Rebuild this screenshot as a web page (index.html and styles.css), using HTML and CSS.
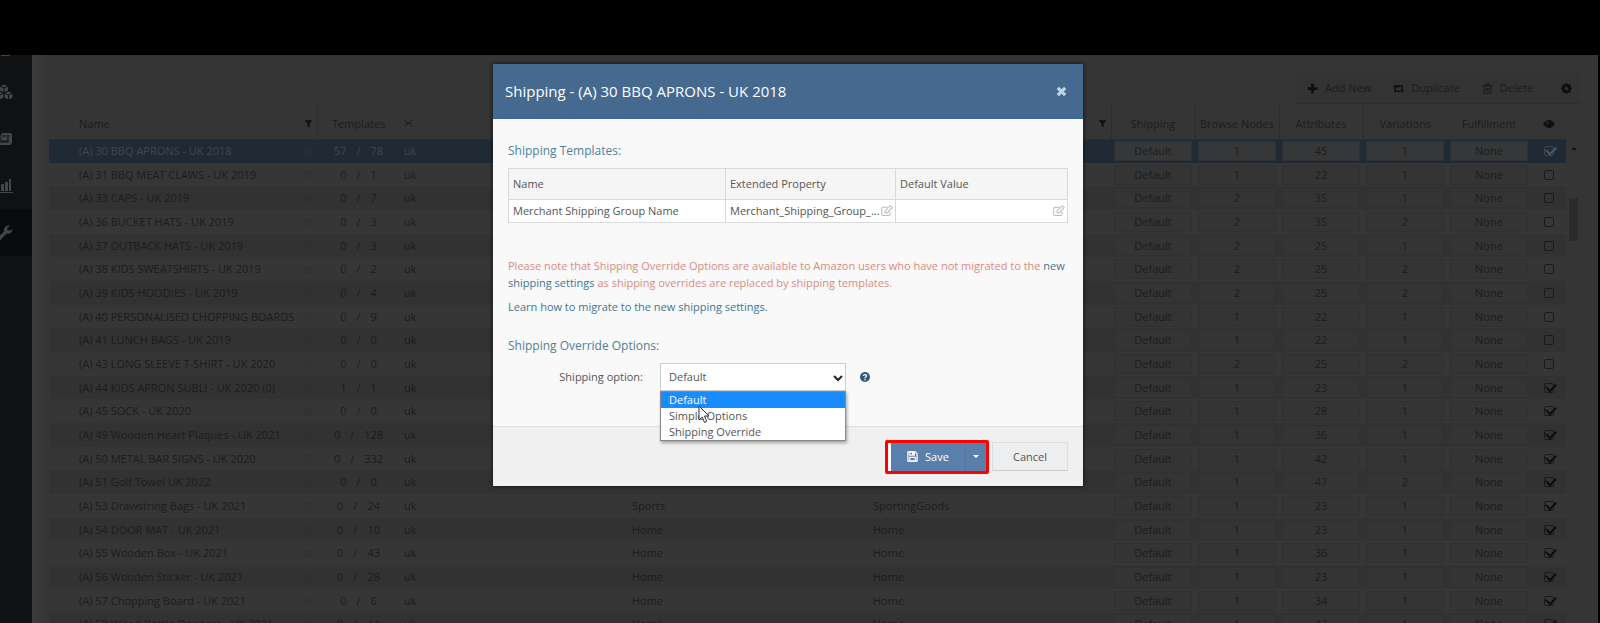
FILE: index.html
```html
<!DOCTYPE html>
<html lang="en">
<head>
<meta charset="utf-8">
<title>Shipping Templates</title>
<link rel="stylesheet" href="styles.css">
</head>
<body>
<svg class="sprite" aria-hidden="true">
  <symbol id="i-edit" viewBox="0 0 16 16"><path d="M12 9v3.500a1.500 1.500 0 0 1-1.500 1.500h-8A1.500 1.500 0 0 1 1 12.500v-8A1.500 1.500 0 0 1 2.500 3H9" fill="none" stroke="currentColor" stroke-width="1.400"/><path d="M5.500 10.500V8L12.500 1l2.500 2.500-7 7z" fill="none" stroke="currentColor" stroke-width="1.400"/></symbol>
  <symbol id="i-filter" viewBox="0 0 16 16"><path d="M1 2h14L10 8v7L6 12V8z" fill="currentColor"/></symbol>
</svg>
<div class="letterbox"></div>
<div class="app">
  <nav class="sidebar" aria-label="Main">
    <a class="nav-item nav-first" href="#" aria-label="Home"><svg viewBox="0 0 16 16"><path d="M4 13h9v2H4z" fill="currentColor"/></svg></a>
    <a class="nav-item" href="#" aria-label="Products"><svg viewBox="0 0 16 16"><g fill="currentColor" stroke="#0f1112"><path d="M7 0l4.500 2v5L7 9 2.500 7V2z"/><path d="M2.500 7L7 9v5l-4.500 2L-2 14V9z"/><path d="M11.500 7L16 9v5l-4.500 2L7 14V9z"/><path d="M2.500 2L7 4l4.500-2M7 4v5M7 9l4.500 2L16 9M11.500 11v5M-2 9l4.500 2L7 9M2.500 11v5" fill="none"/></g></svg></a>
    <a class="nav-item" href="#" aria-label="Orders"><svg viewBox="0 0 16 16"><path d="M5 2h8q2 0 2 2v8l-2 2H0V6h3z" fill="currentColor"/><path d="M5 5h8M4 6v4h7V6M3 11h9" fill="none" stroke="#0f1112"/></svg></a>
    <a class="nav-item" href="#" aria-label="Reports"><svg viewBox="0 0 16 16"><path d="M0 9h2v4H0zM4 6h3v7H4zM8 4h3v9H8zM12 1h2v12h-2zM0 14h16v1H0z" fill="currentColor"/></svg></a>
    <a class="nav-item active" href="#" aria-label="Settings"><svg viewBox="0 0 16 16"><path d="M15.500 4.500a4.500 4.500 0 0 1-6 4L3.500 15A1.800 1.800 0 0 1 1 12.500l6.200-6A4.500 4.500 0 0 1 13 .8L10.300 3l.2 2.200 2.300.3z" fill="currentColor"/></svg></a>
  </nav>
  <main class="content">
    <div class="toolbar">
      <button type="button"><svg viewBox="0 0 16 16"><path d="M8 1v14M1 8h14" stroke="currentColor" stroke-width="4"/></svg>Add New</button>
      <button type="button"><svg viewBox="0 0 16 16"><path d="M3 13V5h7M3 12h7M13 3v8M6 4h7" stroke="currentColor" stroke-width="2" fill="none"/><path d="M0 6l3-4 3 4zM10 10l3 4 3-4z" fill="currentColor"/></svg>Duplicate</button>
      <button type="button"><svg viewBox="0 0 16 16"><path d="M1 4h14M5 4l1-3h4l1 3M3 4v11h10V4M6 7v5M8 7v5M10 7v5" stroke="currentColor" fill="none"/></svg>Delete</button>
      <button type="button" aria-label="Settings"><svg viewBox="0 0 16 16"><circle cx="8" cy="8" r="4.500" fill="none" stroke="currentColor" stroke-width="4"/><path d="M8 0v3M8 13v3M0 8h3M13 8h3M2.500 2.500l2 2M11.500 11.500l2 2M13.500 2.500l-2 2M4.500 11.500l-2 2" stroke="currentColor" stroke-width="2.500"/></svg></button>
    </div>
    <div class="grid-wrap">
      <div class="grid-main">
      <table class="grid">
        <colgroup><col class="c-name"><col class="c-tpl"><col class="c-site"><col class="c-cat"><col><col class="c-act"><col class="c-act"><col class="c-act"><col class="c-act"><col class="c-act"><col class="c-eye"></colgroup>
        <thead>
          <tr>
            <th class="name sep"><div class="split"><span>Name</span><svg><use href="#i-filter"/></svg></div></th>
            <th class="tpl">Templates</th>
            <th class="site" aria-label="Site"><svg viewBox="0 0 16 16"><path d="M1 2l6 6-6 6M15 2L9 8l6 6M3 8h10" stroke="currentColor" stroke-width="1.500" fill="none"/></svg></th>
            <th></th>
            <th class="sep last-cat"><svg><use href="#i-filter"/></svg></th>
            <th class="sep">Shipping</th>
            <th class="sep">Browse Nodes</th>
            <th class="sep">Attributes</th>
            <th>Variations</th>
            <th>Fulfillment</th>
            <th class="visible" aria-label="Visible"><svg viewBox="0 0 16 16"><path d="M0 8q8-11 16 0-8 11-16 0z" fill="currentColor"/><circle cx="6" cy="6" r="1.500" fill="#353535"/></svg></th>
          </tr>
        </thead>
        <tbody id="rows"></tbody>
      </table>
      </div>
      <div class="scroll"><span class="arrow"></span><span class="thumb"></span></div>
    </div>
  </main>
</div>

<section class="modal" role="dialog" aria-labelledby="title">
  <header class="modal-head">
    <h1 id="title">Shipping - (A) 30 BBQ APRONS - UK 2018</h1>
    <button type="button" class="close" aria-label="Close"><svg viewBox="0 0 12 12"><path d="M2 2l8 8M10 2l-8 8" stroke="currentColor" stroke-width="3.500"/></svg></button>
  </header>
  <div class="modal-body">
    <h2>Shipping Templates:</h2>
    <table class="props">
      <thead><tr><th class="p-name">Name</th><th class="p-ext">Extended Property</th><th>Default Value</th></tr></thead>
      <tbody><tr>
        <td>Merchant Shipping Group Name</td>
        <td><div class="split"><span>Merchant_Shipping_Group_...</span><svg><use href="#i-edit"/></svg></div></td>
        <td><div class="split"><span></span><svg><use href="#i-edit"/></svg></div></td>
      </tr></tbody>
    </table>
    <p class="note">Please note that Shipping Override Options are available to Amazon users who have not migrated to the <a href="#">new shipping settings</a> as shipping overrides are replaced by shipping templates.</p>
    <p class="learn"><a href="#">Learn how to migrate to the new shipping settings.</a></p>
    <h2>Shipping Override Options:</h2>
    <div class="field">
      <label for="option">Shipping option:</label>
      <div class="select">
        <select id="option"><option>Default</option><option>Simple Options</option><option>Shipping Override</option></select>
        <svg class="chevron" viewBox="0 0 10 10"><path d="M1 3l4 4 4-4" fill="none" stroke="currentColor" stroke-width="2"/></svg>
        <ul class="menu" role="listbox" aria-label="Shipping option">
          <li role="option" aria-selected="true">Default</li>
          <li role="option">Simple Options</li>
          <li role="option">Shipping Override</li>
        </ul>
        <svg class="pointer" viewBox="0 0 12 19"><path d="M1 1v14l3.300-3 2.200 5.500 2.200-1L6.500 11H11z" fill="#fff" stroke="#333"/></svg>
      </div>
      <svg class="help" viewBox="0 0 12 12" role="img" aria-label="Help"><circle cx="6" cy="6" r="6" fill="#34587c"/><path d="M4 4.600Q4.200 3 6 3t2 1.500q0 1-1.200 1.500Q6 6.400 6 7.300M6 8.200v1.600" fill="none" stroke="#fff" stroke-width="1.500"/></svg>
    </div>
  </div>
  <footer class="modal-foot">
    <div class="save-group">
      <button type="button" class="save"><svg viewBox="0 0 12 12"><path d="M1 1h8l2 2v8H1z" fill="none" stroke="currentColor" stroke-width="1.400"/><path d="M3 1h5v3.500H3zM3 7h6v4H3z" fill="none" stroke="currentColor" stroke-width="1.200"/><path d="M5.500 1H8v3H5.500z" fill="currentColor"/></svg>Save</button>
      <button type="button" class="more" aria-label="More save options"><span class="caret"></span></button>
    </div>
    <button type="button" class="cancel">Cancel</button>
  </footer>
</section>
<script src="script.js"></script>
</body>
</html>
```

FILE: styles.css
```css
* { box-sizing: border-box; }

body {
  margin: 0;
  height: 100vh;
  overflow: hidden;
  display: flex;
  flex-direction: column;
  background: #000;
  color: #1c1c1c;
  font: 11px/16px "Open Sans", sans-serif;
}

button, select, input { font: inherit; color: inherit; margin: 0; }
button { border: 0; background: none; padding: 0; }
svg { display: block; flex: none; }
a { text-decoration: none; }
.sprite { position: absolute; width: 0; height: 0; }
.letterbox { flex: none; height: 55px; }

.app { flex: 1; min-height: 0; display: flex; margin-right: 2px; background: #353535; }

.sidebar { flex: none; width: 32px; overflow: hidden; background: #0f1112; }
.nav-item { display: flex; align-items: center; height: 47px; color: #434547; }
.nav-item svg { width: 16px; height: 16px; margin-left: -3px; }
.nav-first { height: 13px; align-items: flex-start; }
.nav-first svg { margin-top: -14px; }
.active { background: #0a0b0c; }

.content {
  flex: 1;
  min-width: 0;
  padding: 18px 17px 0;
  background: linear-gradient(90deg, #393b3d, #353535 20px);
}
.toolbar { display: flex; justify-content: flex-end; height: 31px; }
.toolbar button { display: flex; align-items: center; gap: 7px; padding: 0 11px; background: #333; border-bottom: 1px solid #2d2d2d; }
.toolbar button:last-child { padding: 0 9px 0 17px; }
.toolbar svg { width: 11px; height: 11px; color: #0e0e0e; }

.grid-wrap { display: flex; }
.grid-main { flex: 1; min-width: 0; }
.grid { width: 100%; border-collapse: collapse; table-layout: fixed; }
.c-name { width: 268px; }
.c-tpl { width: 75px; }
.c-site { width: 228px; }
.c-cat { width: 241px; }
.c-act { width: 84px; }
.c-eye { width: 35px; }
.grid th { height: 35px; padding: 5px 0 0; font-weight: 400; white-space: nowrap; border-bottom: 1px solid #2d2d2d; }
.grid th svg { width: 9px; height: 9px; margin: 0 auto; color: #101010; }
.grid .sep { border-right: 1px solid #2c2c2c; }
.grid .name { padding-left: 30px; text-align: left; }
.grid .site { padding-left: 12px; text-align: left; }
.grid .site svg { margin: 0; color: #191919; }
.grid .visible svg { width: 12px; height: 12px; }
.grid .last-cat svg { margin: 0 4px 0 auto; }
.split { display: flex; align-items: center; justify-content: space-between; padding-right: 4px; }
.grid .split svg { width: 9px; height: 9px; margin: 0; }
.grid .tpl { padding-left: 8px; text-align: center; }

.grid td { padding: 0; white-space: nowrap; }
.grid tbody tr { height: 24px; }
.grid tbody tr:nth-child(3n + 2) { height: 23px; }
.grid tbody tr:nth-child(odd) { background: #323232; }
.grid tbody tr:nth-child(even) { background: #363636; }
.grid td .split svg { color: #2f2f2f; }
.counts { display: flex; justify-content: center; gap: 10px; }
.grid .cat { padding-left: 12px; }
.grid .act { padding: 0 3px; }
.act button { display: block; width: 100%; height: 20px; text-align: center; border: 1px solid #303030; background: #343434; }
.grid .eye { text-align: center; }
.eye input { appearance: none; display: block; position: relative; width: 10px; height: 10px; margin: 0 auto; border: 1px solid #1a1a1a; border-radius: 2px; }
.eye input:checked::after {
  content: "";
  position: absolute;
  left: 1px;
  top: -1px;
  width: 8px;
  height: 5px;
  border: solid #0e0e0e;
  border-width: 0 0 2px 2px;
  transform: rotate(-45deg);
}
.grid tbody tr.selected { background: #202a35; color: #3f474f; }
.selected .act button { color: #1b1b1b; background: #363738; }
.grid .selected .split svg { color: #2b343d; }
.selected .eye input { border-color: #3c4751; }
.selected .eye input:checked::after { border-color: #4c5761; }

.scroll { flex: none; width: 15px; padding-top: 40px; display: flex; flex-direction: column; align-items: center; }
.arrow { border: 3px solid transparent; border-bottom-color: #101010; }
.thumb { width: 9px; height: 43px; margin-top: 48px; background: #2b2b2b; }

.modal {
  position: absolute;
  top: 64px;
  left: calc(50% - 307px);
  width: 590px;
  background: #f9f9f9;
  color: #555;
  box-shadow: 0 0 4px #111;
}
.modal-head { display: flex; align-items: center; justify-content: space-between; height: 55px; padding: 0 16px 0 12px; background: #45698f; border-bottom: 1px solid #3a6593; color: #fff; }
.modal h1 { margin: 0; font-size: 15px; font-weight: 400; line-height: 20px; }
.close { color: #bcd3ea; }
.close svg { width: 11px; height: 11px; }

.modal-body { padding: 22px 15px 35px; }
.modal h2 { margin: 0 0 7px; font-size: 12px; line-height: 20px; font-weight: 400; color: #4d8099; }
.props { width: 100%; border-collapse: collapse; table-layout: fixed; color: #555; }
.props th, .props td { padding: 0 0 0 4px; border: 1px solid #d9d9d9; text-align: left; font-weight: 400; white-space: nowrap; }
.props th { height: 31px; background: #f5f5f5; }
.props td { height: 23px; background: #fff; }
.props .split { padding-right: 2px; }
.props svg { width: 12px; height: 12px; color: #bbb; }
.p-name { width: 217px; }
.p-ext { width: 170px; }
.note { margin: 34px 0 7px; line-height: 17px; color: #d98b80; }
.modal a { color: #3d7594; }
.learn { margin: 0 0 21px; line-height: 17px; }

.field { display: flex; align-items: center; }
.field label { width: 135px; text-align: right; }
.select { position: relative; width: 186px; margin: 0 14px 0 17px; }
.select select { display: block; appearance: none; width: 100%; height: 28px; padding: 0 8px; border: 1px solid #ccc; border-radius: 0; background: #fff; }
.chevron { position: absolute; right: 3px; top: 10px; width: 10px; height: 10px; color: #222; }
.menu { position: absolute; top: 28px; left: 0; right: 0; margin: 0; padding: 0; list-style: none; background: #fff; border: 1px solid #888; box-shadow: 1px 2px 3px #0005; }
.menu li { height: 16px; padding-left: 8px; }
.menu [aria-selected] { color: #fff; background: #1a8cff; }
.pointer { position: absolute; left: 38px; top: 42px; width: 12px; height: 19px; }
.help { width: 10px; height: 10px; }

.modal-foot { display: flex; align-items: center; justify-content: flex-end; gap: 3px; height: 60px; padding: 0 15px; background: #f0f0f0; border-top: 1px solid #ddd; }
.save-group { display: flex; height: 34px; border: 3px solid #f00; border-radius: 2px; padding-left: 3px; background: #fff; color: #fff; }
.save { display: flex; align-items: center; justify-content: center; gap: 7px; width: 74px; background: #5b7fab; }
.save svg { width: 11px; height: 11px; }
.more { display: flex; align-items: center; justify-content: center; width: 21px; background: #5b7fab; border-left: 1px solid #5176a3; }
.caret { border: 3px solid transparent; border-top-color: #fff; border-bottom: 0; }
.cancel { width: 76px; height: 29px; background: #eceeef; border: 1px solid #dcdfe1; border-bottom-color: #ccc; }
```

FILE: script.js
```js
const rows = [
  ["(A) 30 BBQ APRONS - UK 2018", 57, 78, "", "", 1, 45, 1, 1],
  ["(A) 31 BBQ MEAT CLAWS - UK 2019", 0, 1, "", "", 1, 22, 1, 0],
  ["(A) 33 CAPS - UK 2019", 0, 7, "", "", 2, 35, 1, 0],
  ["(A) 36 BUCKET HATS - UK 2019", 0, 3, "", "", 2, 35, 2, 0],
  ["(A) 37 OUTBACK HATS - UK 2019", 0, 3, "", "", 2, 25, 1, 0],
  ["(A) 38 KIDS SWEATSHIRTS - UK 2019", 0, 2, "", "", 2, 25, 2, 0],
  ["(A) 39 KIDS HOODIES - UK 2019", 0, 4, "", "", 2, 25, 2, 0],
  ["(A) 40 PERSONALISED CHOPPING BOARDS", 0, 9, "", "", 1, 22, 1, 0],
  ["(A) 41 LUNCH BAGS - UK 2019", 0, 0, "", "", 1, 22, 1, 0],
  ["(A) 43 LONG SLEEVE T-SHIRT - UK 2020", 0, 0, "", "", 2, 25, 2, 0],
  ["(A) 44 KIDS APRON SUBLI - UK 2020 (0)", 1, 1, "", "", 1, 23, 1, 1],
  ["(A) 45 SOCK - UK 2020", 0, 0, "", "", 1, 28, 1, 1],
  ["(A) 49 Wooden Heart Plaques - UK 2021", 0, 128, "", "", 1, 36, 1, 1],
  ["(A) 50 METAL BAR SIGNS - UK 2020", 0, 332, "", "", 1, 42, 1, 1],
  ["(A) 51 Golf Towel UK 2022", 0, 0, "", "", 1, 47, 2, 1],
  ["(A) 53 Drawstring Bags - UK 2021", 0, 24, "Sports", "SportingGoods", 1, 23, 1, 1],
  ["(A) 54 DOOR MAT - UK 2021", 0, 10, "Home", "Home", 1, 23, 1, 1],
  ["(A) 55 Wooden Box - UK 2021", 0, 43, "Home", "Home", 1, 36, 1, 1],
  ["(A) 56 Wooden Sticker - UK 2021", 0, 28, "Home", "Home", 1, 23, 1, 1],
  ["(A) 57 Chopping Board - UK 2021", 0, 6, "Home", "Home", 1, 34, 1, 1],
  ["(A) 58 Wood Bottle Openers - UK 2021", 0, 11, "Home", "Home", 1, 42, 1, 1]
];

const action = (label) => `<td class="act"><button type="button">${label}</button></td>`;

document.getElementById("rows").innerHTML = rows.map(([name, used, total, cat, type, nodes, attrs, vars, on], i) => `
  <tr${i === 0 ? ' class="selected"' : ""}>
    <td class="name"><div class="split"><span>${name}</span><svg><use href="#i-edit"/></svg></div></td>
    <td class="tpl"><div class="counts"><span>${used}</span><span>/</span><span>${total}</span></div></td>
    <td class="site">uk</td>
    <td class="cat">${cat}</td>
    <td class="cat">${type}</td>
    ${["Default", nodes, attrs, vars, "None"].map(action).join("")}
    <td class="eye"><input type="checkbox" aria-label="Show ${name}"${on ? " checked" : ""}></td>
  </tr>`).join("");
```
